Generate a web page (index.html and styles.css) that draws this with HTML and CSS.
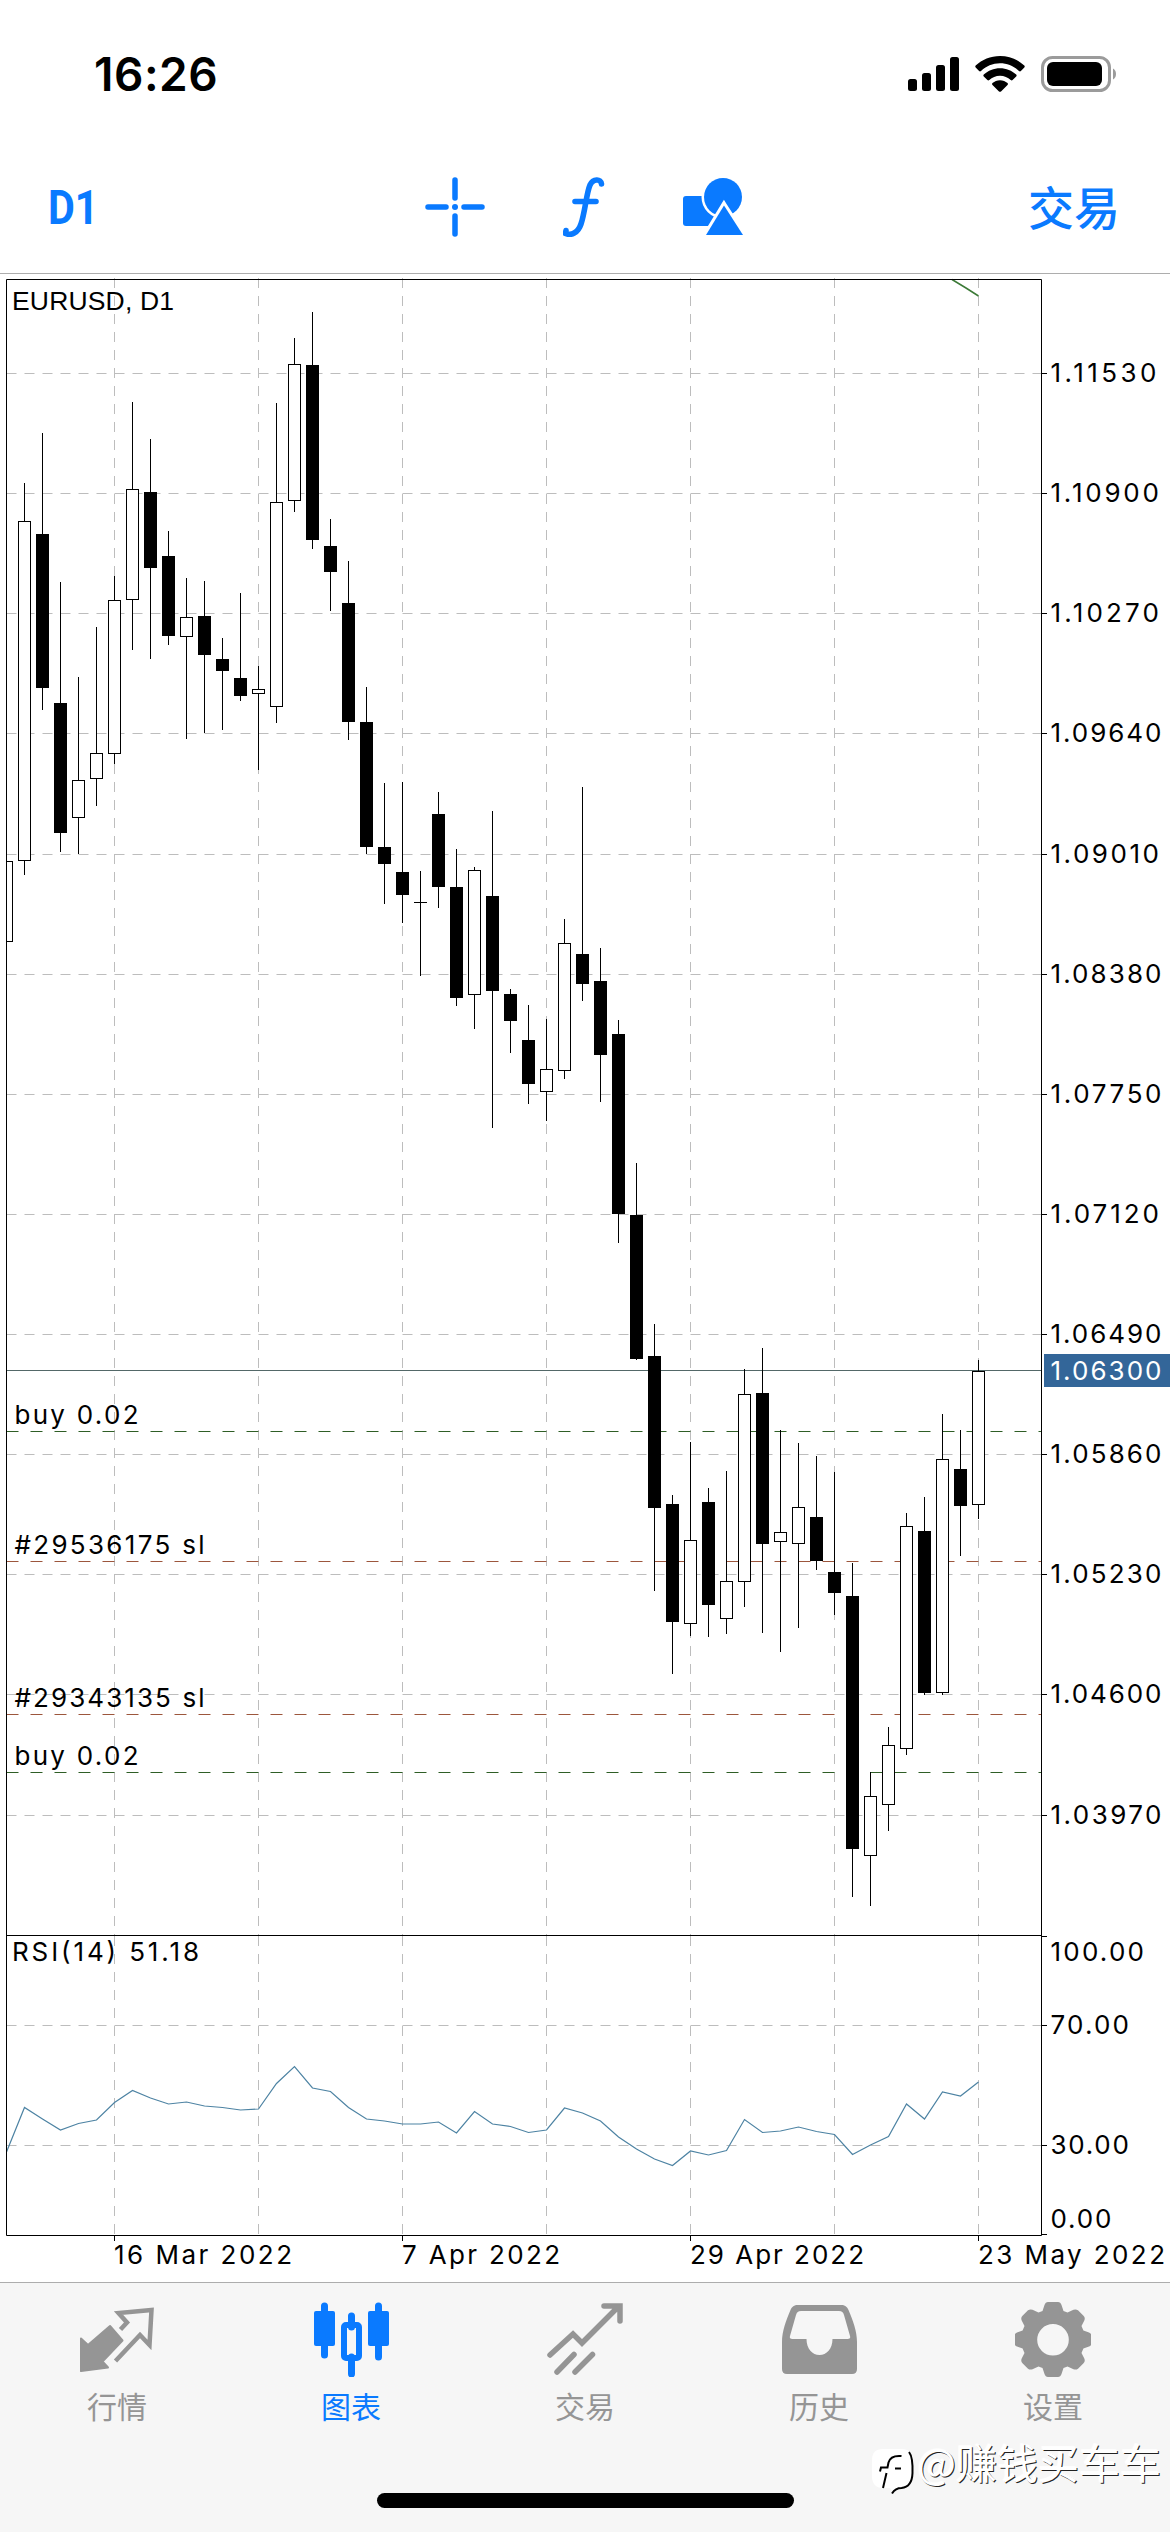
FILE: index.html
```
<!DOCTYPE html>
<html lang="zh-CN">
<head>
  <meta charset="UTF-8">
  <meta name="viewport" content="width=device-width, initial-scale=1.0">
  <title>EURUSD, D1</title>
  <link rel="stylesheet" href="styles.css">
</head>
<body>

<header class="header">
  <div class="status-bar">
    <span class="time">16:26</span>
    <div class="status-icons">
      <svg width="51" height="36" viewBox="0 0 51 36">
        <rect x="0" y="23" width="9" height="12" rx="2.5"/>
        <rect x="14" y="17" width="9" height="18" rx="2.5"/>
        <rect x="28" y="9" width="9" height="26" rx="2.5"/>
        <rect x="42" y="1" width="9" height="34" rx="2.5"/>
      </svg>
      <svg width="50" height="36" viewBox="0 0 50 36">
        <path d="M25 0C34.500 0 43 3.600 49.300 9.600c.6.600.6 1.400 0 2l-3.400 3.500c-.5.500-1.300.5-1.900 0C39 10.300 32.300 7.300 25 7.300S11 10.300 6 15.100c-.6.500-1.400.5-1.900 0L.7 11.600c-.6-.6-.6-1.400 0-2C7 3.600 15.500 0 25 0z"/>
        <path d="M25 12.200c6.200 0 11.900 2.400 16.200 6.300.6.600.6 1.400 0 2l-3.600 3.500c-.5.500-1.300.5-1.900 0-2.800-2.600-6.600-4.200-10.700-4.200s-7.900 1.600-10.700 4.200c-.6.500-1.400.5-1.900 0l-3.600-3.500c-.6-.6-.6-1.400 0-2 4.300-3.900 10-6.300 16.200-6.300z"/>
        <path d="M25 24.200c2.900 0 5.500 1.100 7.500 2.800.6.600.6 1.300 0 1.900l-6.500 6.500c-.6.600-1.400.6-2 0L17.500 28.900c-.6-.6-.6-1.300 0-1.900 2-1.700 4.600-2.800 7.500-2.800z"/>
      </svg>
      <svg width="76" height="36" viewBox="0 0 76 36">
        <rect x="1.500" y="1.500" width="67" height="33" rx="10" fill="none" stroke="#9b9b9b" stroke-width="3"/>
        <rect x="6" y="6" width="55" height="24" rx="6"/>
        <path d="M72 12.500c4 2 4 9 0 11z" fill="#9b9b9b"/>
      </svg>
    </div>
  </div>

  <nav class="toolbar">
    <span class="period">D1</span>
    <div class="tools">
      <svg width="60" height="60" viewBox="0 0 60 60">
        <path d="M30 3v18M30 39v18M3 30h18M39 30h18" stroke="currentColor" stroke-width="5.500" stroke-linecap="round"/>
        <circle cx="30" cy="30" r="3" fill="currentColor"/>
      </svg>
      <svg width="42" height="60" viewBox="0 0 42 60">
        <path d="M38.500 7C38 1.500 30 1.500 27 8c-3.500 8-5 27-9 39-3 9-10 12-15.500 9.500l.5-3M12 24.500h21" fill="none" stroke="currentColor" stroke-width="5.600" stroke-linecap="round" stroke-linejoin="round"/>
      </svg>
      <svg width="62" height="60" viewBox="0 0 62 60">
        <rect x="0" y="19" width="32" height="30" rx="3" fill="currentColor"/>
        <circle cx="40" cy="20" r="19" fill="currentColor" stroke="#fff" stroke-width="5" paint-order="stroke"/>
        <path d="M41 28.500L60 58H23z" fill="currentColor" stroke="#fff" stroke-width="6" paint-order="stroke"/>
      </svg>
    </div>
    <span class="trade">交易</span>
  </nav>
</header>

<main class="chart">
  <svg id="chart" width="1170" height="2008" viewBox="0 274 1170 2008">
    <g id="grid" class="grid"></g>
    <g id="levels"></g>
    <polyline class="ma" points="952,279.500 966,288 978.500,296"/>
    <g id="candles"></g>
    <polyline id="rsi" class="rsi"/>

    <path class="frame" d="M6.500 279.500H1041.500V2235.500H6.500zM6.500 1935.500H1041.500"/>
    <g id="ticks" class="frame"></g>
    <rect class="price-tag" x="1044" y="1354" width="126" height="33"/>
    <g id="labels"></g>

    <text class="symbol" x="12" y="310" textLength="162">EURUSD, D1</text>
    <text class="label" x="12" y="1960.500" textLength="187">RSI(14) 51.18</text>
  </svg>
</main>

<footer class="tabbar">
  <div class="tabs">
    <a class="tab">
      <svg width="76" height="76" viewBox="0 0 76 76">
        <path d="M31 25L43.500 39.500 23.500 60.500l5.500 6-27 3.500V37.500l7 6.500z" fill="currentColor" stroke="currentColor" stroke-width="2" stroke-linejoin="round"/>
        <path d="M41.500 28.500L48 21.500 39.500 12l33-3-2 35-9.500-10-24.500 26" fill="none" stroke="currentColor" stroke-width="4.500"/>
      </svg>
      <span>行情</span>
    </a>
    <a class="tab active">
      <svg width="76" height="76" viewBox="0 0 76 76">
        <path d="M11.500 5v49M65.500 5v51M38.500 15v11M38.500 56v17" stroke="currentColor" stroke-width="7" stroke-linecap="round"/>
        <rect x="1" y="10" width="21" height="35" rx="2" fill="currentColor"/>
        <rect x="55" y="10" width="21" height="35" rx="2" fill="currentColor"/>
        <rect x="31" y="24" width="15" height="33" rx="2" fill="none" stroke="currentColor" stroke-width="6"/>
      </svg>
      <span>图表</span>
    </a>
    <a class="tab">
      <svg width="76" height="76" viewBox="0 0 76 76">
        <path d="M3 54L26 33l9 9L71 6M57 5h16v15M10 71L27 53.500M28 71L45.500 53.500" fill="none" stroke="currentColor" stroke-width="5.500" stroke-linecap="round"/>
      </svg>
      <span>交易</span>
    </a>
    <a class="tab">
      <svg width="76" height="76" viewBox="0 0 76 76">
        <path fill-rule="evenodd" d="M17 4h43c4 0 6 1.500 7.500 5C72 20 76 30 76 41v27q0 5-5 5H6q-5 0-5-5V41C1 30 5 20 9.500 9 11 5.500 13 4 17 4zM20 10c-3 0-4 1-5 4L9 35q-1 3 2.500 3h14c0 10 6 16 13 16s13-6 13-16h15q3.500 0 2.500-3L63 14c-1-3-2-4-5-4z" fill="currentColor"/>
      </svg>
      <span>历史</span>
    </a>
    <a class="tab">
      <svg width="76" height="76" viewBox="0 0 76 76">
        <path fill-rule="evenodd" d="M33 1h10q2.500 0 3.500 3l2 6 4 1.600 6-2.800q2.500-1 4.500.5l5.500 5.500q2 2 .8 4.700L66.500 25l1.900 4.500 5.600 2q2.500 1 2.500 3.500v7q0 2.500-2.500 3.500l-5.600 2-1.900 4.500 2.800 5.500q1.200 2.700-.8 4.700L63 67.700q-2 1.500-4.500.5l-6-2.800-4 1.600-2 6q-1 3-3.500 3H33q-2.500 0-3.500-3l-2-6-4-1.600-6 2.800q-2.500 1-4.500-.5l-5.500-5.500q-2-2-.8-4.700L9.500 52l-1.900-4.500-5.600-2Q-.5 44.500-.5 42v-7q0-2.500 2.500-3.500l5.600-2L9.500 25l-2.800-5.500q-1.200-2.700.8-4.700L13 9.300q2-1.500 4.500-.5l6 2.800 4-1.600 2-6q1-3 3.500-3zM38 23a15.800 15.800 0 1 0 0 31.600A15.800 15.800 0 1 0 38 23z" fill="currentColor"/>
      </svg>
      <span>设置</span>
    </a>
  </div>
  <div class="home-indicator"></div>
  <div class="watermark">
    <svg width="46" height="50" viewBox="0 0 46 50">
      <path d="M12 3h19q10 0 10 11v16q0 10-9 11-7 1-9.500 6L19 42h-7Q1 42 1 30V14Q1 3 12 3z" fill="#fff"/>
      <path d="M38 6q4 5 3.500 21-.5 14-11 15-6 0-9.500 5.500M30.500 10q-11-1-13 6.500l-1 5h-6.500l-1 4M15.500 27L12 42M24 22.500h6" fill="none" stroke="#000" stroke-width="2"/>
    </svg>
    <span>@赚钱买车车</span>
  </div>
</footer>

<script src="chart.js"></script>
</body>
</html>
```
FILE: styles.css
```
* {
  box-sizing: border-box;
}

body {
  margin: 0;
  width: 1170px;
  height: 2532px;
  display: flex;
  flex-direction: column;
  overflow: hidden;
  background-color: #fff;
  font-family: Inter, "Noto Sans CJK SC", sans-serif;
}

svg {
  display: block;
}

.header {
  height: 274px;
  border-bottom: 1px solid #adadad;
}

.status-bar {
  display: flex;
  justify-content: space-between;
  align-items: center;
  height: 148px;
  padding: 0 53px 0 94px;
}

.time {
  font-size: 46px;
  font-weight: 600;
  letter-spacing: 0.5px;
}

.status-icons {
  display: flex;
  gap: 16px;
}

.toolbar {
  display: flex;
  justify-content: space-between;
  align-items: center;
  height: 118px;
  padding: 0 50px 0 48px;
  color: #0a7aff;
}

.period,
.trade {
  white-space: nowrap;
}

.trade {
  width: 92px;
  padding-bottom: 5px;
  font-family: "Noto Sans CJK SC", sans-serif;
  font-size: 46px;
  font-weight: 500;
}

.period {
  width: 94px;
  font-family: Roboto, sans-serif;
  font-size: 48px;
  font-weight: 700;
  transform: scaleX(0.86);
  transform-origin: left;
}

.tools {
  display: flex;
  align-items: center;
  gap: 78px;
}

/* chart */
.chart {
  height: 2008px;
}

.grid {
  stroke: #bdbdbd;
  stroke-width: 1;
}

.grid line {
  stroke-dasharray: 10 8;
}

.frame {
  fill: none;
  stroke: #000;
  stroke-width: 1;
}

.candle {
  stroke: #000;
  stroke-width: 1;
  fill: #000;
}

.candle.up rect {
  fill: #fff;
}

.ma {
  fill: none;
  stroke: #3c7a37;
  stroke-width: 1.5;
}

.rsi {
  fill: none;
  stroke: #4d83a3;
  stroke-width: 1.2;
}

.bid {
  stroke: #536868;
}

.position {
  stroke: #2f5e26;
  stroke-dasharray: 12 12;
}

.stop {
  stroke: #9c563c;
  stroke-dasharray: 12 12;
}

.label {
  font-size: 26px;
}

.symbol {
  font-family: "Liberation Sans", sans-serif;
  font-size: 26.500px;
}

.price-tag {
  fill: #336699;
}

.label.current {
  fill: #fff;
}

/* bottom tabs */
.tabbar {
  position: relative;
  height: 250px;
  border-top: 1px solid #adadad;
  background-color: #f6f6f6;
}

.tabs {
  display: flex;
  padding-top: 18px;
}

.tab {
  flex: 1;
  display: flex;
  flex-direction: column;
  align-items: center;
  gap: 8px;
  color: #959595;
  font-size: 30px;
  line-height: 44px;
}

.tab.active {
  color: #0a7aff;
}

.home-indicator {
  width: 417px;
  height: 15px;
  margin: 64px auto 0;
  border-radius: 8px;
  background-color: #000;
}

.watermark {
  position: absolute;
  right: 9px;
  bottom: 36px;
  display: flex;
  align-items: flex-end;
  color: #fff;
  font-family: "Noto Sans CJK SC", sans-serif;
  font-size: 41px;
  line-height: 50px;
  text-shadow: 1px 1px 0 #222, -1px -1px 1px #fff;
}

.watermark span {
  padding-bottom: 10px;
}
```
FILE: chart.js
```
const NS = 'http://www.w3.org/2000/svg';
const LEFT = 6.5;
const RIGHT = 1041.5;
const STEP = 18;

function add(parent, tag, attrs, text) {
  const el = document.createElementNS(NS, tag);
  for (const key in attrs) el.setAttribute(key, attrs[key]);
  if (text) el.textContent = text;
  parent.appendChild(el);
  return el;
}

function line(parent, x1, y1, x2, y2, cls) {
  return add(parent, 'line', cls ? { x1, y1, x2, y2, class: cls } : { x1, y1, x2, y2 });
}

// width of a number on the scale
function numberWidth(text) {
  let width = 0;
  for (const c of text) width += c === '.' ? 8 : c === '1' ? 15 : 17.6;
  return width;
}

const grid = document.getElementById('grid');
const ticks = document.getElementById('ticks');
const labels = document.getElementById('labels');
const levels = document.getElementById('levels');

function scaleLabel(text, y, cls = 'label') {
  add(labels, 'text', { x: 1050.5, y, class: cls, textLength: numberWidth(text) }, text);
}

// vertical grid, every 8 bars
for (let x = 114.5; x < RIGHT; x += 144) {
  line(grid, x, 278, x, 1935);
  line(grid, x, 1936, x, 2235);
}

// price scale
const prices = ['1.11530', '1.10900', '1.10270', '1.09640', '1.09010', '1.08380', '1.07750',
  '1.07120', '1.06490', '1.05860', '1.05230', '1.04600', '1.03970'];
prices.forEach((price, i) => {
  const y = Math.floor(373.6 + i * 120.12) + 0.5;
  line(grid, LEFT, y, RIGHT, y);
  line(ticks, RIGHT, y, 1047, y);
  scaleLabel(price, y + 8.5);
});
scaleLabel('1.06300', 1380, 'label current');

// RSI scale
[['100.00', 1936.5, 1961], ['70.00', 2025.5, 2034], ['30.00', 2145.5, 2154], ['0.00', 2234.5, 2228]].forEach(([text, y, ty]) => {
  line(ticks, RIGHT, y, 1047, y);
  scaleLabel(text, ty);
});
line(grid, LEFT, 2025.5, RIGHT, 2025.5);
line(grid, LEFT, 2145.5, RIGHT, 2145.5);

// dates
[['16 Mar 2022', 114.5, 178], ['7 Apr 2022', 402.5, 158], ['29 Apr 2022', 690.5, 174], ['23 May 2022', 978.5, 187]].forEach(([text, x, width]) => {
  line(ticks, x, 2235, x, 2241);
  add(labels, 'text', { x: x - 0.5, y: 2264, class: 'label', textLength: width }, text);
});

// bid line and open orders
line(levels, LEFT, 1370.5, RIGHT, 1370.5, 'bid');
[['buy 0.02', 1431.5, 'position', 124], ['#29536175 sl', 1561.5, 'stop', 190],
  ['#29343135 sl', 1714.5, 'stop', 190], ['buy 0.02', 1772.5, 'position', 124]].forEach(([text, y, cls, width]) => {
  line(levels, LEFT, y, RIGHT, y, cls);
  add(labels, 'text', { x: 14.5, y: y - 8, class: 'label', textLength: width }, text);
});

// high, body top, body bottom, low, up
const candles = [
  [861, 861, 941, 941, 1], [483, 521, 860, 875, 1], [433, 534, 687, 710, 0],
  [582, 703, 832, 852, 0], [677, 780, 817, 854, 1], [627, 753, 778, 806, 1],
  [576, 600, 753, 764, 1], [402, 489, 599, 650, 1], [439, 492, 567, 659, 0],
  [531, 556, 635, 645, 0], [578, 617, 636, 739, 1], [581, 616, 654, 733, 0],
  [638, 659, 670, 730, 0], [593, 678, 695, 701, 0], [666, 689, 693, 770, 1],
  [403, 502, 706, 723, 1], [338, 364, 500, 512, 1], [312, 365, 539, 549, 0],
  [519, 546, 571, 611, 0], [561, 603, 721, 740, 0], [687, 722, 846, 854, 0],
  [783, 847, 863, 904, 0], [782, 872, 894, 923, 0], [871, 902, 902, 976, 0],
  [792, 814, 886, 908, 0], [849, 887, 997, 1006, 0], [867, 870, 994, 1029, 1],
  [811, 896, 990, 1128, 0], [989, 994, 1020, 1053, 0], [1005, 1040, 1083, 1104, 0],
  [1019, 1069, 1091, 1121, 1], [919, 943, 1070, 1079, 1], [787, 954, 983, 1001, 0],
  [948, 981, 1054, 1102, 0], [1020, 1034, 1213, 1243, 0], [1163, 1215, 1358, 1360, 0],
  [1324, 1356, 1507, 1591, 0], [1495, 1504, 1621, 1674, 0], [1442, 1540, 1623, 1636, 1],
  [1488, 1502, 1604, 1637, 0], [1471, 1581, 1618, 1634, 1], [1369, 1394, 1581, 1607, 1],
  [1348, 1393, 1543, 1633, 0], [1430, 1532, 1541, 1652, 1], [1443, 1507, 1543, 1628, 1],
  [1456, 1517, 1560, 1570, 0], [1472, 1572, 1592, 1615, 0], [1563, 1596, 1848, 1897, 0],
  [1772, 1796, 1855, 1906, 1], [1727, 1745, 1804, 1831, 1], [1513, 1526, 1748, 1755, 1],
  [1497, 1531, 1692, 1695, 0], [1414, 1459, 1692, 1695, 1], [1430, 1469, 1505, 1556, 0],
  [1360, 1371, 1504, 1519, 1]
];
const group = document.getElementById('candles');
candles.forEach(([high, top, bottom, low, up], i) => {
  const x = LEFT + i * STEP;
  const g = add(group, 'g', { class: up ? 'candle up' : 'candle' });
  if (low > high) line(g, x, high, x, low);
  // open equals close
  if (top === bottom) {
    line(g, x - 6.5, top + 0.5, x + 6.5, top + 0.5);
    return;
  }
  // the first bar is cut by the chart edge
  const left = i === 0 ? x : x - 6;
  add(g, 'rect', { x: left, y: top + 0.5, width: x + 6 - left, height: bottom - top });
});

const rsi = [2152, 2107.5, 2119, 2130, 2123.5, 2120, 2102.5, 2090.5, 2098, 2104, 2102, 2106, 2107.5,
  2110, 2109, 2083.5, 2066.5, 2088, 2091.5, 2107.5, 2119, 2121, 2124, 2124, 2122, 2133, 2111.5,
  2124, 2126.5, 2132.5, 2130, 2108, 2113, 2121, 2137, 2149, 2159, 2165.5, 2151, 2155, 2150.5,
  2119.5, 2132.5, 2131, 2127, 2131.5, 2134.5, 2154.5, 2145, 2136.5, 2104, 2119, 2092, 2096, 2082];
document.getElementById('rsi').setAttribute('points', rsi.map((y, i) => `${LEFT + i * STEP},${y}`).join(' '));
```
